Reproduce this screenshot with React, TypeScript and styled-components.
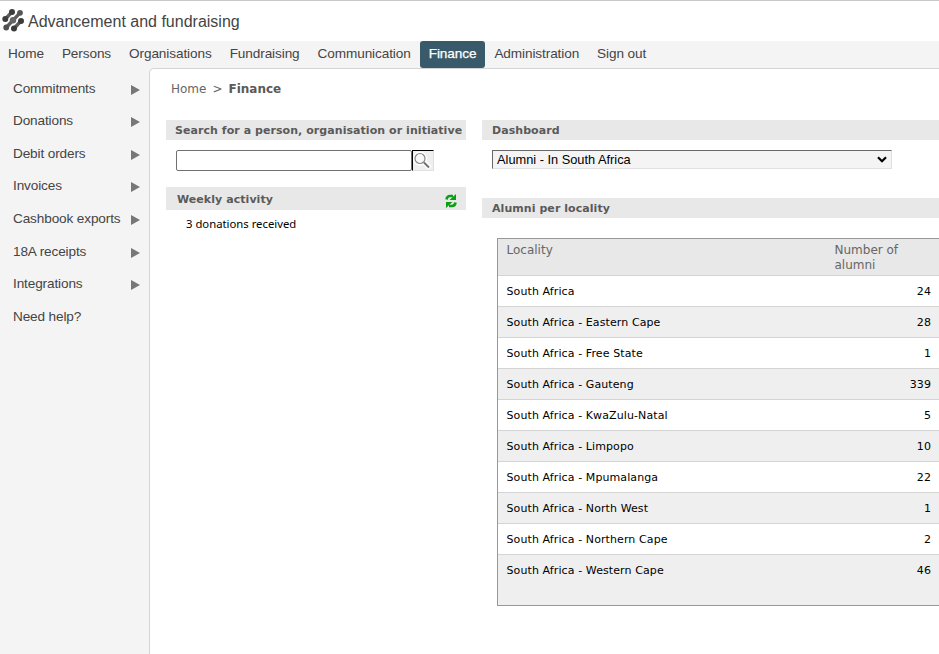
import React from 'react';
import styled, { createGlobalStyle } from 'styled-components';

const verdana = "Verdana, 'DejaVu Sans', sans-serif";
const arial = "'Liberation Sans', Arial, sans-serif";

const Global = createGlobalStyle`
  * { box-sizing: border-box; }
  html, body { margin: 0; background: #fff; overflow: hidden; }
`;
const Page = styled.div`
  height: 654px;
  display: flex;
  flex-direction: column;
  overflow: hidden;
  font-family: ${arial};
  color: #444;
`;
const Header = styled.header`
  height: 41px;
  flex: none;
  border-top: 1px solid #c8c8c8;
  display: flex;
  align-items: center;
  gap: 3px;
  padding: 1px 0 0 2px;
  font-size: 16px;
  line-height: 18px;
`;
const Logo = styled.svg`
  width: 23px;
  height: 24px;
  margin-top: -3px;
`;
const Nav = styled.nav`
  height: 27px;
  flex: none;
  display: flex;
  background: #f4f4f4;
`;
const NavItem = styled.a<{ $active?: boolean }>`
  padding: 0 9px;
  font-size: 13.6px;
  letter-spacing: -0.1px;
  line-height: 25px;
  white-space: nowrap;
  border-radius: 3px;
  color: ${(p) => (p.$active ? '#fff' : '#444')};
  background: ${(p) => (p.$active ? '#385a6a' : 'transparent')};
  -webkit-text-stroke: ${(p) => (p.$active ? '0.25px #fff' : '0')};
  &:first-child { padding-left: 8px; }
`;
const Body = styled.div`
  flex: 1;
  display: flex;
  background: #f4f4f4;
`;
const Sidebar = styled.aside`
  width: 149px;
  flex: none;
  padding-top: 4.5px;
`;
const SideItem = styled.a`
  display: flex;
  justify-content: space-between;
  align-items: center;
  height: 32.55px;
  padding: 0 9px 0 13px;
  font-size: 13.6px;
  letter-spacing: -0.13px;
  line-height: 16px;
`;
const Arrow = styled.svg`
  width: 9px;
  height: 10px;
  margin-top: 2px;
`;
const Main = styled.main`
  flex: 1;
  min-width: 0;
  background: #fff;
  border: 1px solid #d4d4d4;
  border-width: 1px 0 0 1px;
  border-top-left-radius: 5px;
  padding-left: 16px;
`;
const Crumbs = styled.div`
  display: flex;
  gap: 6px;
  height: 51px;
  padding: 13px 0 0 5px;
  font: 12px/15px ${verdana};
  color: #666;
`;
const Current = styled.b`
  color: #5a5a5a;
`;
const Columns = styled.div`
  display: grid;
  grid-template-columns: 300px 457px;
  column-gap: 16px;
`;
const Column = styled.section`
  min-width: 0;
`;
const Title = styled.h2<{ $tall?: boolean; $inset?: number }>`
  margin: 0;
  height: ${(p) => (p.$tall ? 23 : 20)}px;
  display: flex;
  align-items: center;
  justify-content: space-between;
  padding: 2px 9px 0 ${(p) => p.$inset ?? 10}px;
  background: #e8e8e8;
  color: #5a5a5a;
  font: bold 11px/14px ${verdana};
  letter-spacing: 0.06px;
  white-space: nowrap;
`;
const SearchRow = styled.form`
  display: flex;
  height: 47px;
  padding: 10px 0 0 10px;
`;
const SearchInput = styled.input`
  width: 236px;
  height: 21px;
  border: 1px solid #707070;
  border-radius: 2px;
  padding: 1px 2px;
`;
const SearchButton = styled.button`
  width: 22px;
  height: 21px;
  padding: 0;
  border: 1px solid #e0e0e0;
  border-top: 1px solid #000;
  border-left: 1px solid #000;
  background: #efefef;
  display: flex;
`;
const Refresh = styled.svg`
  width: 12px;
  height: 14px;
  margin-top: 2px;
`;
const Activity = styled.p`
  margin: 0;
  padding: 6px 0 0 20px;
  font: 11.3px/16px 'Noto Sans', sans-serif;
  color: #000;
`;
const SelectBox = styled.div`
  display: flex;
  align-items: center;
  justify-content: space-between;
  width: 400px;
  height: 19px;
  margin: 10px 0 29px 10px;
  padding: 0 4px;
  border: 1px solid #e0e0e0;
  border-top-color: #686868;
  border-left-color: #686868;
  background: #f4f4f4;
  color: #000;
  font-size: 12.8px;
  line-height: 17px;
`;
const Chevron = styled.svg`
  width: 10px;
  height: 7px;
`;
const Table = styled.div`
  margin: 20px 0 0 15px;
  height: 368px;
  border: 1px solid #989898;
  border-right: 0;
  background: #efefef;
`;
const TableHead = styled.div`
  display: grid;
  grid-template-columns: 328px 90px;
  height: 36px;
  padding: 4px 0 0 8.5px;
  background: #e8e8e8;
  color: #666;
  font: 12px/15px ${verdana};
`;
const TableRow = styled.div`
  display: flex;
  justify-content: space-between;
  height: 31px;
  border-top: 1px solid #d4d4d4;
  padding: 8px 8px 0 8.5px;
  background: #fff;
  color: #000;
  font: 11px/16px ${verdana};
  letter-spacing: 0.1px;
  &:nth-child(odd) { background: #efefef; }
`;

const navItems = ['Home', 'Persons', 'Organisations', 'Fundraising', 'Communication', 'Finance', 'Administration', 'Sign out'];
const sideItems = ['Commitments', 'Donations', 'Debit orders', 'Invoices', 'Cashbook exports', '18A receipts', 'Integrations'];
const rows: [string, number][] = [
  ['South Africa', 24],
  ['South Africa - Eastern Cape', 28],
  ['South Africa - Free State', 1],
  ['South Africa - Gauteng', 339],
  ['South Africa - KwaZulu-Natal', 5],
  ['South Africa - Limpopo', 10],
  ['South Africa - Mpumalanga', 22],
  ['South Africa - North West', 1],
  ['South Africa - Northern Cape', 2],
  ['South Africa - Western Cape', 46],
];

export default function App() {
  return (
    <Page>
      <Global />
      <Header>
        <Logo viewBox="0 0 23 24">
          <g stroke="#5c5c5c" strokeWidth="3.4" strokeLinecap="round">
            <path d="M3.300 11 10 4M4.200 19.500 18 4.800M12 20.500 19 13" />
          </g>
          <g fill="#3c3c3c">
            <circle cx="10" cy="4" r="3" /><circle cx="18" cy="4.800" r="2.9" fill="#555" />
            <circle cx="3.300" cy="11" r="3" /><circle cx="11" cy="12.200" r="3.200" fill="#666" />
            <circle cx="19" cy="13" r="3" /><circle cx="4.200" cy="19.500" r="2.900" fill="#505050" />
            <circle cx="12" cy="20.500" r="3" />
          </g>
        </Logo>
        <span>Advancement and fundraising</span>
      </Header>
      <Nav>
        {navItems.map((n) => <NavItem key={n} $active={n === 'Finance'}>{n}</NavItem>)}
      </Nav>
      <Body>
        <Sidebar>
          {sideItems.map((s) => (
            <SideItem key={s}>
              {s}
              <Arrow viewBox="0 0 9 10"><path d="M0 0 9 5 0 10Z" fill="#777" /></Arrow>
            </SideItem>
          ))}
          <SideItem>Need help?</SideItem>
        </Sidebar>
        <Main>
          <Crumbs><span>Home</span><span>&gt;</span><Current>Finance</Current></Crumbs>
          <Columns>
            <Column>
              <Title $inset={9}>Search for a person, organisation or initiative</Title>
              <SearchRow>
                <SearchInput />
                <SearchButton type="button">
                  <svg width="20" height="19" viewBox="0 0 20 19" fill="none">
                    <path d="M10.500 11 17 17" stroke="#fff" strokeWidth="5" />
                    <circle cx="7" cy="7.500" r="5.500" fill="#f8f8f8" stroke="#fff" strokeWidth="3" />
                    <circle cx="7" cy="7.500" r="5" stroke="#888" strokeWidth="1.200" />
                    <path d="m11 11.500 5 5" stroke="#707070" strokeWidth="2" />
                  </svg>
                </SearchButton>
              </SearchRow>
              <Title $tall $inset={11}>
                Weekly activity
                <Refresh viewBox="0 0 12 14">
                  <path d="M1.500 5.500Q2 2 5 2H8M10.500 8.500Q10 12 7 12H4" fill="none" stroke="#0aa012" strokeWidth="2.600" />
                  <path d="M11 0V6H4.500ZM1 14V8H7.500Z" fill="#0aa012" />
                </Refresh>
              </Title>
              <Activity>3 donations received</Activity>
            </Column>
            <Column>
              <Title>Dashboard</Title>
              <SelectBox>
                Alumni - In South Africa
                <Chevron viewBox="0 0 10 7" fill="none" stroke="#000" strokeWidth="2.200"><path d="M1 1.300 5 5.300 9 1.300" /></Chevron>
              </SelectBox>
              <Title>Alumni per locality</Title>
              <Table>
                <TableHead><span>Locality</span><span>Number of alumni</span></TableHead>
                {rows.map(([name, n]) => (
                  <TableRow key={name}><span>{name}</span><span>{n}</span></TableRow>
                ))}
              </Table>
            </Column>
          </Columns>
        </Main>
      </Body>
    </Page>
  );
}
